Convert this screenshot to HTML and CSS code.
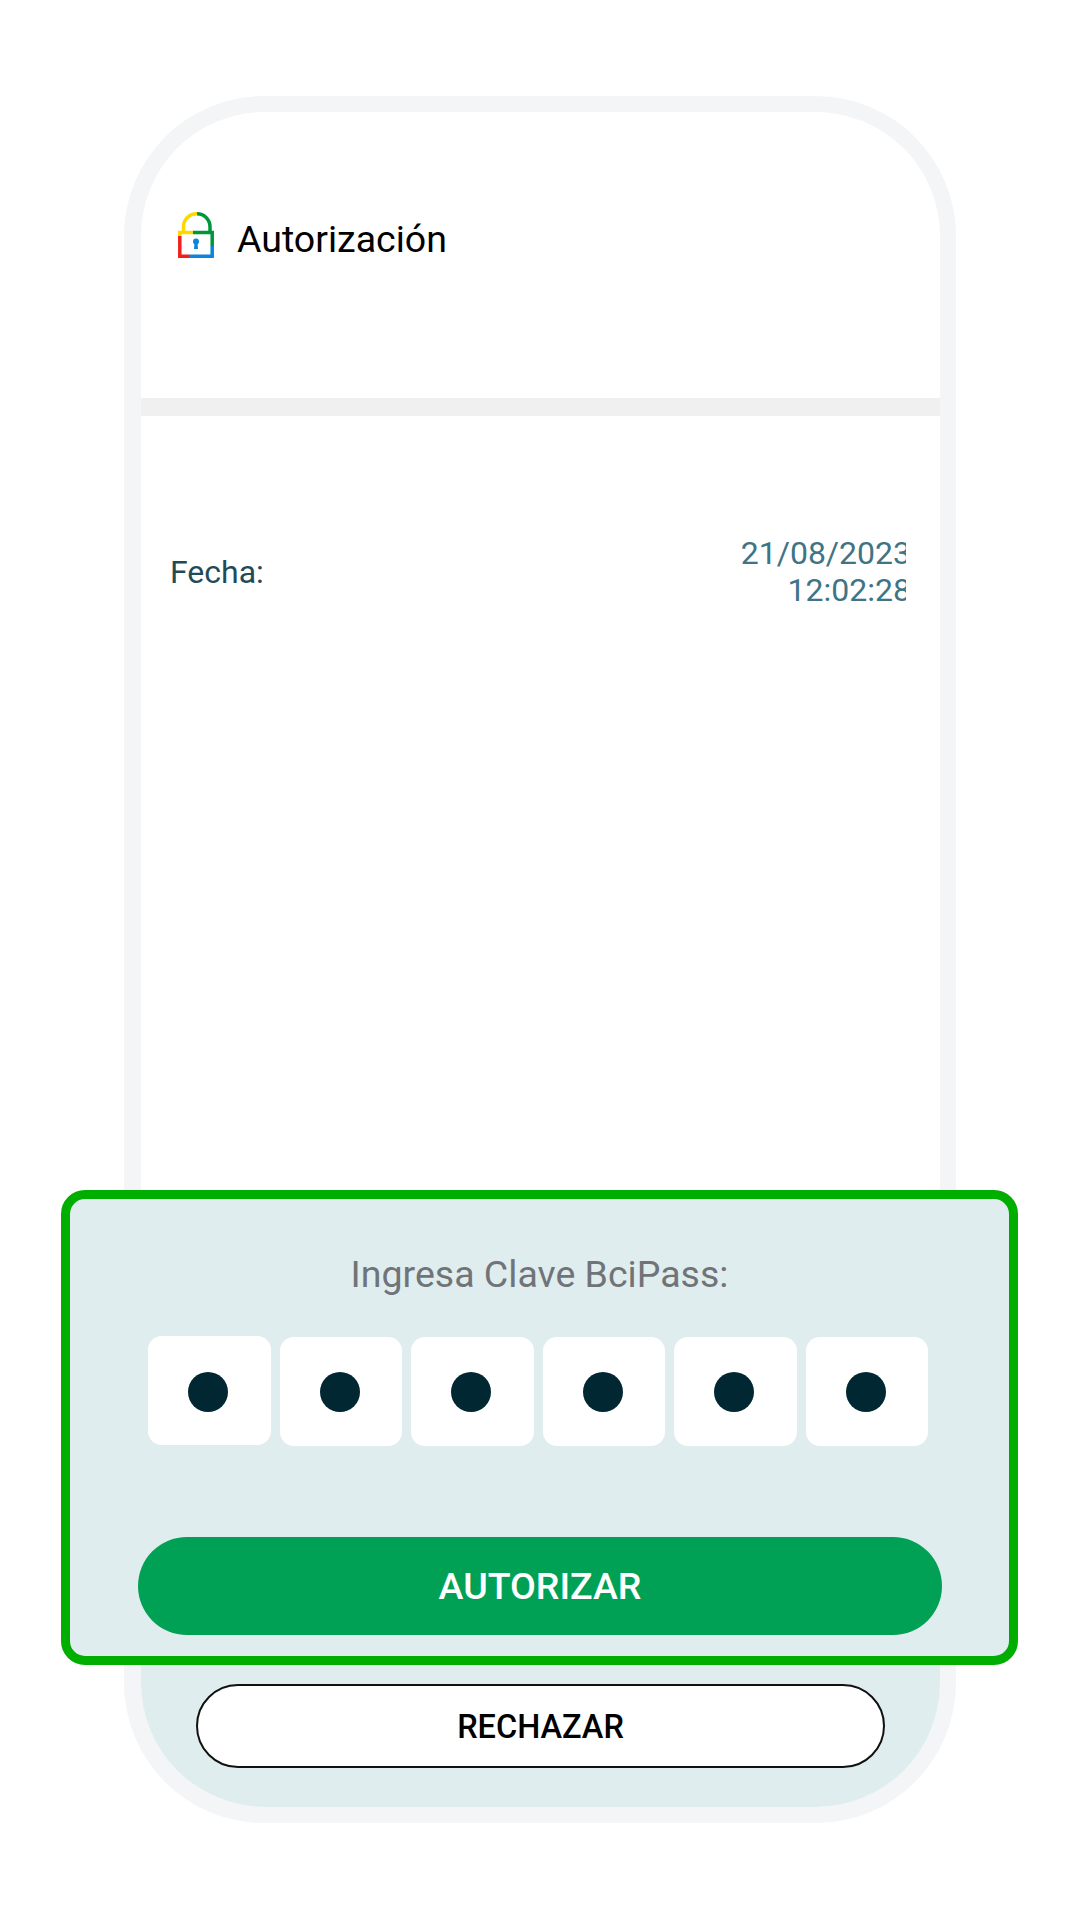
FILE: index.html
```html
<!DOCTYPE html>
<html lang="es">
<head>
  <meta charset="UTF-8" />
  <title>Autorización</title>
  <link rel="stylesheet" href="styles.css">
</head>
<body>
  <div class="phone">
    <div class="header">
      <svg class="lock" viewBox="0 0 36 46" width="36" height="46" fill="none" stroke-width="3.500">
        <path d="M5.500 20V14.500A13 13 0 0 1 19 1.800" stroke="#fdd800"/>
        <path d="M1.800 24V20.500H15" stroke="#fdd800"/>
        <path d="M19 1.800A13 13 0 0 1 32 14.500V20" stroke="#00963c"/>
        <path d="M15 20.500H34.200V34" stroke="#00963c"/>
        <path d="M34.200 34V44.200H11" stroke="#0a84dc"/>
        <path d="M11 44.200H1.800V24" stroke="#f0201c"/>
        <circle cx="18" cy="29.500" r="3" fill="#0a84dc"/>
        <path d="M16.500 31H19.500L20 37H16Z" fill="#0a84dc"/>
      </svg>
      <span class="title">Autorización</span>
    </div>
    <div class="divider"></div>
    <div class="row">
      <span class="row-label">Fecha:</span>
      <div class="row-value">
        <div class="value-line">21/08/2023</div>
        <div class="value-line">12:02:28</div>
      </div>
    </div>
    <div class="panel">
      <div class="panel-title">Ingresa Clave BciPass:</div>
      <div class="pin">
        <div class="pin-box first"><span class="dot"></span></div>
        <div class="pin-box"><span class="dot"></span></div>
        <div class="pin-box"><span class="dot"></span></div>
        <div class="pin-box"><span class="dot"></span></div>
        <div class="pin-box"><span class="dot"></span></div>
        <div class="pin-box"><span class="dot"></span></div>
      </div>
      <button class="btn-ok">AUTORIZAR</button>
    </div>
    <div class="footer">
      <button class="btn-no">RECHAZAR</button>
    </div>
  </div>
</body>
</html>
```

FILE: styles.css
```css
body {
  margin: 0;
  background: #fff;
  font-family: Roboto, sans-serif;
}

.phone {
  box-sizing: border-box;
  width: 832px;
  height: 1727px;
  margin: 96px 0 0 124px;
  border: 16px solid #f3f5f7;
  border-left-width: 17px;
  border-radius: 140px;
  background: #fff;
  display: flex;
  flex-direction: column;
}

.header {
  flex: none;
  height: 286px;
  padding: 100px 0 0 37px;
  box-sizing: border-box;
  display: flex;
  align-items: flex-start;
  gap: 23px;
}

.lock {
  flex: none;
}

.title {
  font-size: 37.500px;
  line-height: 46px;
  margin-top: 4px;
  color: #000;
}

.divider {
  flex: none;
  height: 18px;
  background: #f0f0f1;
}

.row {
  flex: none;
  display: flex;
  justify-content: space-between;
  align-items: center;
  padding: 119px 34px 0 29px;
}

.row-label {
  font-size: 32px;
  color: #1f4b58;
}

.row-value {
  width: 200px;
  overflow: hidden;
  font-size: 32px;
  line-height: 37px;
  color: #3f7484;
  text-align: right;
}

.value-line {
  margin-right: -5px;
  white-space: nowrap;
}

.panel {
  flex: none;
  box-sizing: border-box;
  margin: auto -78px 0 -80px;
  height: 475px;
  border: 9px solid #00ae00;
  border-radius: 24px;
  background: #e0edef;
  padding: 53px 68px 0;
}

.panel-title {
  font-size: 37.500px;
  line-height: 44px;
  color: #707478;
  text-align: center;
}

.pin {
  display: flex;
  align-items: flex-start;
  gap: 9px;
  margin: 41px 0 0 10px;
}

.pin-box {
  width: 122.500px;
  height: 109px;
  background: #fff;
  border-radius: 14px;
  display: flex;
  align-items: center;
  justify-content: center;
}

/* first box sits a pixel higher than the rest */
.pin-box.first {
  margin-top: -1px;
  padding-top: 2px;
  height: 107px;
}

.dot {
  width: 40px;
  height: 40px;
  border-radius: 50%;
  background: #012732;
  margin-left: -2px;
}

.btn-ok {
  display: block;
  width: 804px;
  height: 98px;
  margin: 91px 0 0 0;
  border: none;
  border-radius: 49px;
  background: #00a155;
  color: #fff;
  font-family: Roboto, sans-serif;
  font-size: 37.500px;
  font-weight: 500;
}

.footer {
  flex: none;
  height: 142px;
  box-sizing: border-box;
  background: #e0edef;
  border-radius: 0 0 124px 124px;
  padding-top: 19px;
  display: flex;
  justify-content: center;
}

.btn-no {
  box-sizing: border-box;
  width: 689px;
  height: 84px;
  padding-top: 3px;
  border: 2px solid #111;
  border-radius: 42px;
  background: #fff;
  color: #000;
  font-family: Roboto, sans-serif;
  font-size: 32.500px;
  font-weight: 500;
}
```
